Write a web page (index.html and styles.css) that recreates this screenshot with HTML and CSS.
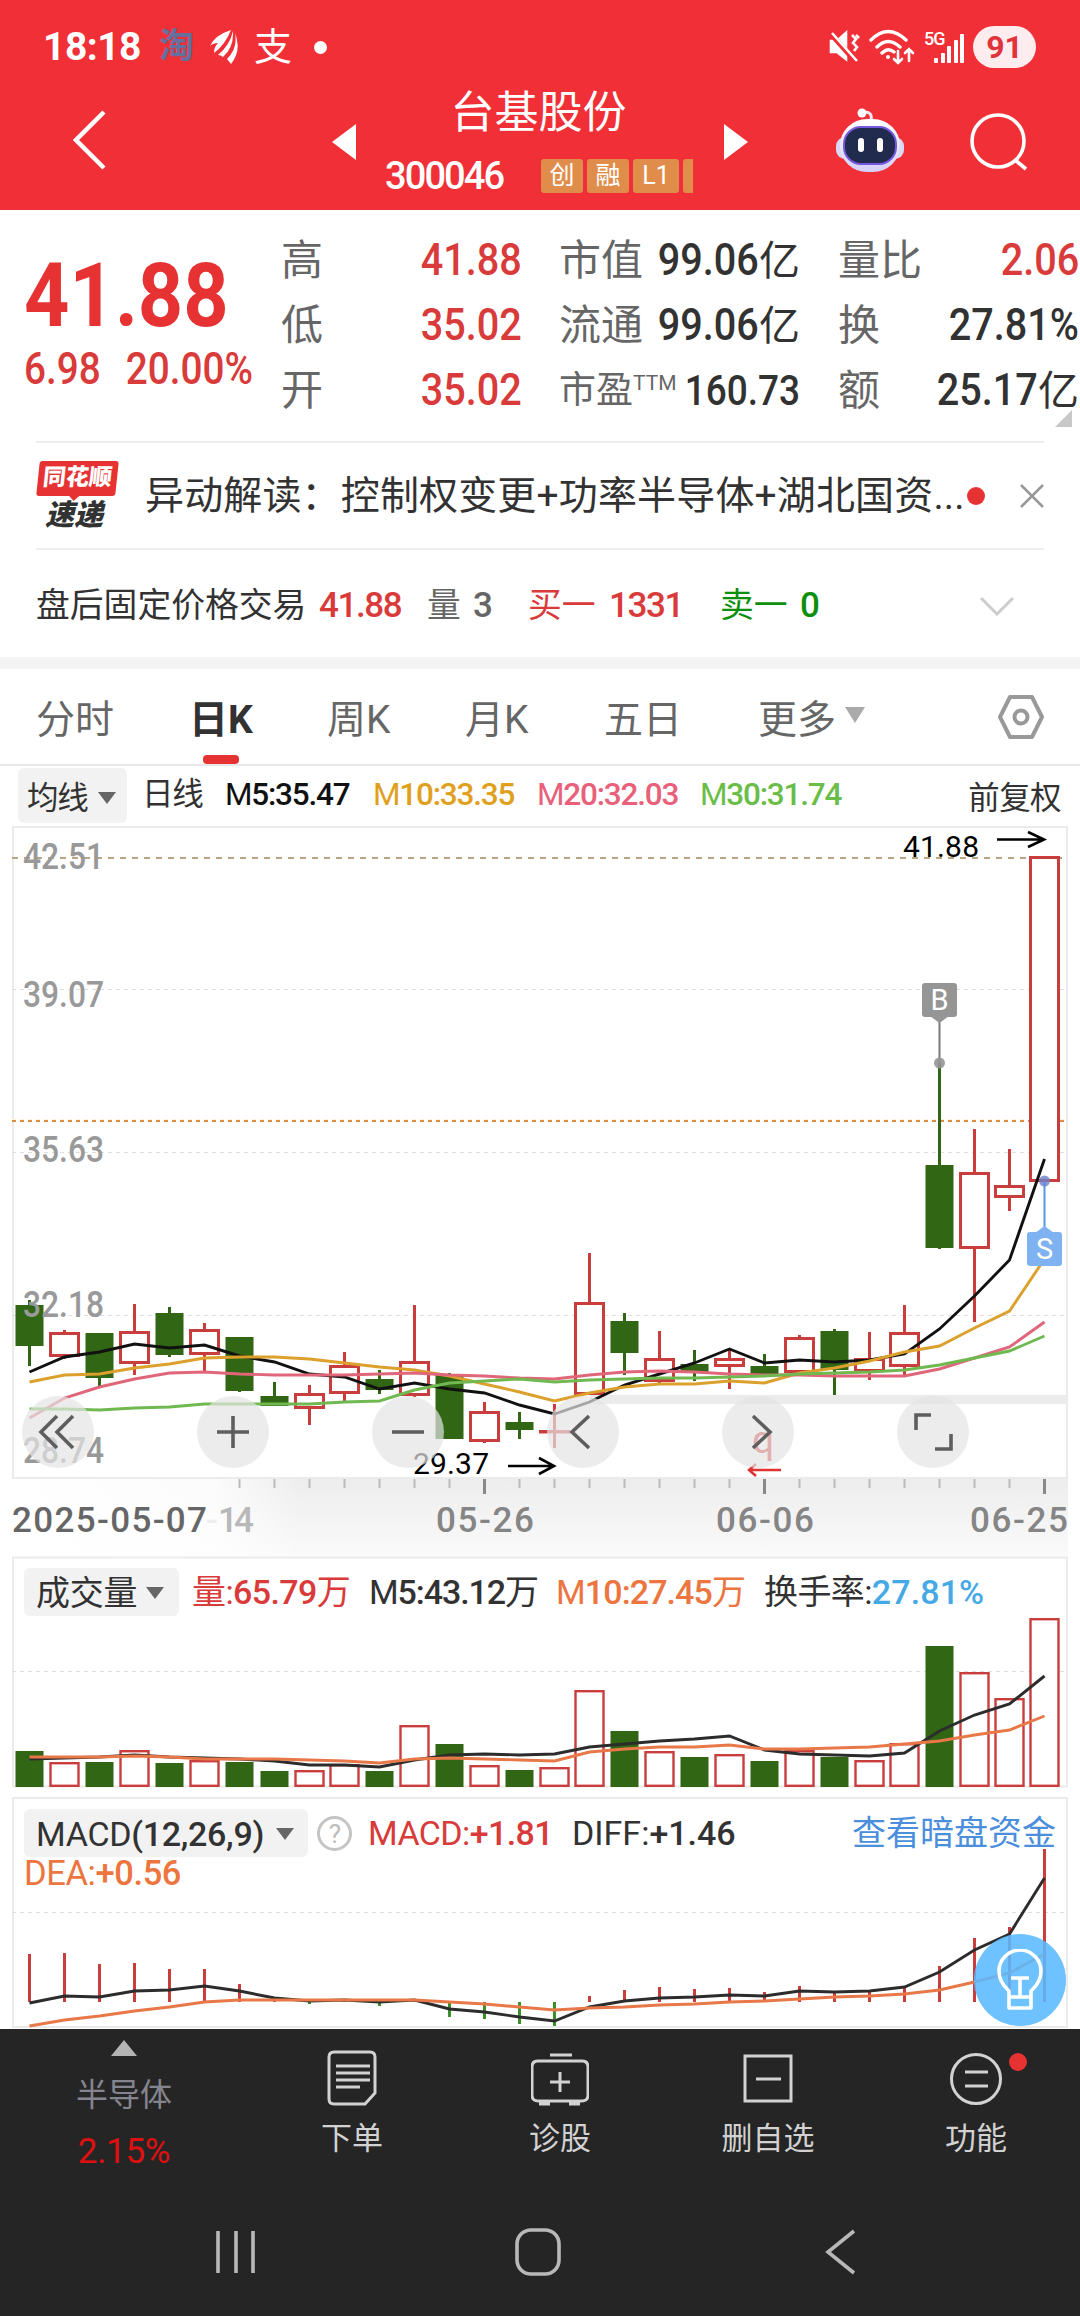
FILE: index.html
```html
<!DOCTYPE html>
<html lang="zh-CN">
<head>
    <meta charset="UTF-8">
    <meta name="viewport" content="width=device-width, initial-scale=1.0">
    <title>台基股份 300046</title>
    <link rel="stylesheet" href="styles.css">
</head>
<body>
    <header class="header">
        <div class="status">
            <span class="clock">18:18</span>
            <span class="tao">淘</span>
            <svg class="wing" width="30" height="34" viewBox="0 0 30 34"><path d="M21 0Q5 5 0 16Q3 13 8 13Q4 17 4 23Q15 15 21 0ZM23 1Q20 15 8 25Q11 25 13 27Q24 17 23 1ZM25 3Q28 18 17 29L21 34Q32 20 25 3Z" fill="#fff"/></svg>
            <span class="zhi">支</span>
            <span class="dot"></span>
            <div class="status-right">
                <svg width="31" height="34" viewBox="0 0 31 34" fill="none" stroke="#fff" stroke-width="2.6"><path d="M2 11h6l9-8v26l-9-7H2z" fill="#fff"/><path d="M1 3l25 28" stroke="#f12f37" stroke-width="5"/><path d="M3 3l25 28M23 5l4 4-3 4 4 4-3 4M27 5l3 3"/></svg>
                <svg width="48" height="36" viewBox="0 0 48 36" fill="none" stroke="#fff" stroke-width="3.4" stroke-linecap="round"><path d="M3 11Q20-6 38 11M9 18Q20 7 32 18M14 24Q20 18 26 23"/><circle cx="20" cy="28" r="2" fill="#fff" stroke="none"/><path d="M30 22v12m-4-4l4 4 4-4M41 32V20m-4 4l4-4 4 4" stroke-width="2.6"/></svg>
                <div class="signal"><span>5G</span><svg width="32" height="32" viewBox="0 0 32 32" fill="#fff"><rect x="1" y="27" width="4" height="5" rx="1"/><rect x="8" y="22" width="4" height="10" rx="1"/><rect x="14" y="15" width="4" height="17" rx="1"/><rect x="21" y="9" width="4" height="23" rx="1"/><rect x="27" y="3" width="4" height="29" rx="1"/></svg></div>
                <span class="battery">91</span>
            </div>
        </div>
        <div class="titlebar">
            <svg class="back" width="34" height="62" viewBox="0 0 34 62"><path d="M31 3L3 31l28 28" fill="none" stroke="#fff" stroke-width="4.5"/></svg>
            <svg class="prev" width="24" height="36" viewBox="0 0 24 36"><path d="M24 0v36L0 18z" fill="#fff"/></svg>
            <div class="stock">
                <h1>台基股份</h1>
                <div class="code-row">
                    <span class="code">300046</span>
                    <span class="tag">创</span><span class="tag">融</span><span class="tag l1">L1</span><span class="tag cut"></span>
                </div>
            </div>
            <svg class="next" width="24" height="36" viewBox="0 0 24 36"><path d="M0 0v36l24-18z" fill="#fff"/></svg>
            <svg class="robot" width="70" height="66" viewBox="0 0 70 66">
                <defs><linearGradient id="rb" x1="0" y1="0" x2="0" y2="1"><stop offset="0" stop-color="#fff"/><stop offset="1" stop-color="#d5d0f7"/></linearGradient></defs>
                <path d="M36 14Q38 4 28 5" fill="none" stroke="#f3e4ee" stroke-width="3"/><circle cx="27" cy="6" r="4.500" fill="#fff"/>
                <rect x="1" y="30" width="68" height="22" rx="9" fill="#d9d8f6"/>
                <rect x="5" y="12" width="60" height="53" rx="27" fill="url(#rb)"/>
                <rect x="9" y="20" width="52" height="37" rx="17" fill="#202b4d" stroke="#7457dd" stroke-width="2"/>
                <rect x="23" y="31" width="6" height="14" rx="3" fill="#fff"/><rect x="42" y="31" width="6" height="14" rx="3" fill="#fff"/>
            </svg>
            <svg class="search" width="60" height="60" viewBox="0 0 60 60" fill="none" stroke="#fff" stroke-width="3.600"><circle cx="29" cy="30" r="26"/><path d="M46 49l11 9"/></svg>
        </div>
    </header>

    <section class="quote">
        <div class="price">
            <div class="last">41.88</div>
            <div class="change"><span>6.98</span><span>20.00%</span></div>
        </div>
        <dl class="stats">
            <div><dt>高</dt><dd class="red"><b>41.88</b></dd></div>
            <div><dt>低</dt><dd class="red"><b>35.02</b></dd></div>
            <div><dt>开</dt><dd class="red"><b>35.02</b></dd></div>
        </dl>
        <dl class="stats">
            <div><dt>市值</dt><dd><b>99.06</b>亿</dd></div>
            <div><dt>流通</dt><dd><b>99.06</b>亿</dd></div>
            <div class="small"><dt>市盈<sup>TTM</sup></dt><dd><b>160.73</b></dd></div>
        </dl>
        <dl class="stats">
            <div><dt>量比</dt><dd class="red"><b>2.06</b></dd></div>
            <div><dt>换</dt><dd><b>27.81%</b></dd></div>
            <div><dt>额</dt><dd><b>25.17</b>亿</dd></div>
        </dl>
        <i class="corner"></i>
    </section>

    <section class="news">
        <div class="logo"><b>同花顺</b><em>速递</em></div>
        <p>异动解读：控制权变更+功率半导体+湖北国资...</p>
        <i class="red-dot"></i>
        <svg width="24" height="24" viewBox="0 0 24 24"><path d="M1 1l22 22M23 1L1 23" stroke="#999" stroke-width="2.500"/></svg>
    </section>

    <section class="after">
        <span class="name">盘后固定价格交易</span>
        <span class="n red v1">41.88</span>
        <span class="gray v2">量</span><span class="n gray v3">3</span>
        <span class="red v4">买一</span><span class="n red v5">1331</span>
        <span class="green v6">卖一</span><span class="n green">0</span>
        <svg width="34" height="20" viewBox="0 0 34 20"><path d="M1 2l16 16L33 2" fill="none" stroke="#ccc" stroke-width="3"/></svg>
    </section>

    <nav class="tabs">
        <a class="t1">分时</a>
        <a class="t2 active">日K</a>
        <a class="t3">周K</a>
        <a class="t4">月K</a>
        <a class="t5">五日</a>
        <a class="t6">更多<i class="arrow"></i></a>
        <svg width="46" height="44" viewBox="0 0 46 44" fill="none" stroke="#999" stroke-width="4"><path d="M12 2h22l10 20-10 20H12L2 22z" stroke-linejoin="round"/><circle cx="23" cy="22" r="6.500"/></svg>
    </nav>

    <div class="ma-row">
        <span class="pill">均线<i class="arrow"></i></span>
        <span class="cycle">日线</span>
        <span class="m5">M<b>5:35.47</b></span>
        <span class="m10">M<b>10:33.35</b></span>
        <span class="m20">M<b>20:32.03</b></span>
        <span class="m30">M<b>30:31.74</b></span>
        <span class="fq">前复权</span>
    </div>

    <section class="panel kline">
        <svg id="kline" width="1080" height="730" viewBox="0 826 1080 730">
            <defs>
                <linearGradient id="axisbg" x1="0" y1="0" x2="0" y2="1"><stop offset="0" stop-color="#ededed"/><stop offset="1" stop-color="#fafafa"/></linearGradient>
                <linearGradient id="fade"><stop offset="0" stop-color="#fff"/><stop offset=".7" stop-color="#fff" stop-opacity=".8"/><stop offset="1" stop-color="#fff" stop-opacity="0"/></linearGradient>
            </defs>
            <rect x="13" y="1479" width="1055" height="77" fill="url(#axisbg)"/>
            <rect x="12" y="1479" width="290" height="77" fill="url(#fade)"/>
            <rect x="13" y="827" width="1054" height="651" fill="#fff" stroke="#ebebeb" stroke-width="2"/>
            <path d="M12 989.500H1067M12 1152.500H1067M12 1315.500H1067" class="grid"/>
            <path d="M12 858H1067" stroke="#b9a582" stroke-width="2" stroke-dasharray="6 6"/>
            <path d="M12 1119.500H1067" stroke="#fdf3d4" stroke-dasharray="4 4"/>
            <path d="M12 1121H1067" stroke="#d98b4a" stroke-width="2" stroke-dasharray="4 4"/>
            <rect x="590" y="1395" width="478" height="9" fill="#ebebeb"/>
            <g id="candles"></g>
            <g class="price-label">
                <text x="23" y="868.500" textLength="81" lengthAdjust="spacingAndGlyphs">42.51</text>
                <text x="23" y="1006.500" textLength="81" lengthAdjust="spacingAndGlyphs">39.07</text>
                <text x="23" y="1161.500" textLength="81" lengthAdjust="spacingAndGlyphs">35.63</text>
                <text x="23" y="1316.500" textLength="81" lengthAdjust="spacingAndGlyphs">32.18</text>
                <text x="23" y="1462.500" textLength="81" lengthAdjust="spacingAndGlyphs">28.74</text>
            </g>
            <g id="ma"></g>
            <g class="mark">
                <text x="903" y="857" textLength="76">41.88</text>
                <path d="M997 839.500h47M1028 832l16 7.500-16 7.500"/>
                <text x="413" y="1474" textLength="76">29.37</text>
                <path d="M508 1466h46M539 1458l15 8-15 8"/>
            </g>
            <text x="752" y="1453" font-size="39" fill="#d33">q</text>
            <path d="M781 1470h-32M756 1464l-7 6 7 6" fill="none" stroke="#d33" stroke-width="2.500"/>
            <g class="flag" fill="#959595">
                <path d="M939.500 1020v43" stroke="#777" stroke-width="2"/>
                <circle cx="939.500" cy="1063" r="5.500" opacity=".9"/>
                <path d="M930 1016h19l-9.500 7z"/>
                <rect x="922" y="983" width="35" height="34" rx="3"/>
                <text x="939.500" y="1010">B</text>
            </g>
            <g class="flag" fill="#7fb2f0">
                <path d="M1044.500 1181v50" stroke="#5a96e0" stroke-width="2"/>
                <circle cx="1044.500" cy="1181" r="5.500" fill="#6b80cc" opacity=".8"/>
                <path d="M1035 1233h19l-9.500-7z"/>
                <rect x="1027" y="1232" width="35" height="34" rx="3"/>
                <text x="1044.500" y="1259">S</text>
            </g>
            <g id="ticks"></g>
            <g class="date-label">
                <text x="206" y="1532" fill="#eee">-</text>
                <text x="218" y="1532" textLength="36" fill="#b8b8b8">14</text>
                <text x="12" y="1532" textLength="195" fill="#666">2025-05-07</text>
                <text x="436" y="1532" textLength="98">05-26</text>
                <text x="716" y="1532" textLength="98">06-06</text>
                <text x="970" y="1532" textLength="98">06-25</text>
            </g>
            <g fill="#e4e4e4" fill-opacity=".7">
                <circle cx="58" cy="1432" r="36"/><circle cx="233" cy="1432" r="36"/><circle cx="408" cy="1432" r="36"/>
                <circle cx="583" cy="1432" r="36"/><circle cx="758" cy="1432" r="36"/><circle cx="933" cy="1432" r="36"/>
            </g>
            <path class="tool" d="M57 1416l-16 16 16 16M73 1416l-16 16 16 16M217 1432h32M233 1416v32M392 1432h32M589 1416l-17 16 17 16M753 1416l17 16-17 16M931 1415h-15v15M951 1434v15h-16"/>
        </svg>
    </section>

    <section class="panel volume">
        <svg id="volume" width="1080" height="241" viewBox="0 1556 1080 241">
            <rect x="13" y="1557.500" width="1054" height="229" fill="#fff" stroke="#ebebeb" stroke-width="2"/>
            <path d="M12 1671.500H1067" class="grid"/>
        </svg>
        <div class="legend">
            <span class="pill">成交量<i class="arrow"></i></span>
            <span class="red vol">量:<b>65.79</b>万</span>
            <span class="dark v5">M<b>5:43.12</b>万</span>
            <span class="orange v10">M<b>10:27.45</b>万</span>
            <span class="dark">换手率:</span><span class="blue"><b>27.81%</b></span>
        </div>
    </section>

    <section class="panel macd">
        <svg id="macd" width="1080" height="232" viewBox="0 1797 1080 232">
            <rect x="13" y="1798" width="1054" height="229" fill="#fff" stroke="#ebebeb" stroke-width="2"/>
            <path d="M12 1912.500H1067" class="grid"/>
        </svg>
        <div class="legend">
            <span class="pill">MACD<b>(12,26,9)</b><i class="arrow"></i></span>
            <span class="help">?</span>
            <span class="red mv">MACD:<b>+1.81</b></span>
            <span class="dark">DIFF:<b>+1.46</b></span>
            <a class="link">查看暗盘资金</a>
        </div>
        <div class="dea orange">DEA:<b>+0.56</b></div>
        <div class="bulb">
            <svg width="46" height="62" viewBox="0 0 46 62" fill="none" stroke="#fff" stroke-width="3.600" stroke-linejoin="round"><path d="M12 48V42Q2 33 2 22a21 21 0 0 1 42 0Q44 33 34 42v6M12 48h22v11H12zM14 29h18M23 29v19"/></svg>
        </div>
    </section>

    <footer class="footer">
        <div class="menu">
            <div class="sector"><i></i><span>半导体</span><strong>2.15%</strong></div>
            <div class="item">
                <svg width="58" height="58" viewBox="0 0 58 58"><path d="M11 3h36q5 0 5 5v36L42 55H11q-5 0-5-5V8q0-5 5-5zM13 17h34M13 24h34M13 31h34M13 38h24"/></svg>
                <span>下单</span>
            </div>
            <div class="item">
                <svg width="58" height="58" viewBox="0 0 58 58"><path d="M19 6h22M7 12h44q6 0 6 6v28q0 6-6 6H7q-6 0-6-6V18q0-6 6-6zM8 55h11M38 55h11M29 23v20M19 33h20"/></svg>
                <span>诊股</span>
            </div>
            <div class="item">
                <svg width="58" height="58" viewBox="0 0 58 58"><path d="M6 7h46v45H6zM17 30h25"/></svg>
                <span>删自选</span>
            </div>
            <div class="item">
                <svg width="58" height="58" viewBox="0 0 58 58"><circle cx="29" cy="30" r="24.500"/><path d="M18 23h23M18 37h23"/></svg>
                <span>功能</span>
                <i class="red-dot"></i>
            </div>
        </div>
        <div class="sysnav">
            <svg width="42" height="46" viewBox="0 0 42 46"><path d="M3 2v42M21 2v42M38 2v42"/></svg>
            <svg width="46" height="48" viewBox="0 0 46 48"><rect x="2" y="2" width="42" height="44" rx="14"/></svg>
            <svg width="32" height="46" viewBox="0 0 32 46"><path d="M29 2L3 23l26 21"/></svg>
        </div>
    </footer>

    <script src="script.js"></script>
</body>
</html>
```
FILE: styles.css
```css
* {
    box-sizing: border-box;
}

body {
    margin: 0;
    width: 1080px;
    background: #fff;
    color: #323232;
    font-family: Roboto, "Noto Sans CJK SC", sans-serif;
}

h1, p, dl, dd {
    margin: 0;
    font-weight: 400;
}

svg {
    display: block;
    flex: none;
}

b {
    font-weight: 500;
}

.red { color: #d93a3a; }
.green { color: #0c8f0c; }
.gray { color: #666; }
.dark { color: #323232; }
.orange { color: #ec7540; }
.blue { color: #45a9e6; }

.red-dot {
    width: 18px;
    height: 18px;
    border-radius: 50%;
    background: #e63232;
}

.arrow {
    display: inline-block;
    border: 9px solid transparent;
    border-top: 12px solid #666;
    border-bottom: 0;
}

/* header */
.header {
    height: 210px;
    background: #f12f37;
    color: #fff;
}

.status {
    display: flex;
    align-items: center;
    height: 94px;
    padding: 0 44px 0 43px;
}

.clock {
    width: 116px;
    font-size: 39px;
    font-weight: 700;
    letter-spacing: -0.5px;
}

.tao {
    width: 51px;
    color: #65709f;
    font-size: 35px;
    font-weight: 700;
    line-height: 36px;
}

.zhi {
    margin-left: 14px;
    font-size: 38px;
    line-height: 36px;
}

.status .dot {
    width: 13px;
    height: 13px;
    margin-left: 22px;
    border-radius: 50%;
    background: #fff;
}

.status-right {
    display: flex;
    align-items: center;
    gap: 8px;
    margin-left: auto;
}

.signal {
    position: relative;
    width: 40px;
    padding-left: 9px;
}

.signal span {
    position: absolute;
    left: 0;
    top: -3px;
    font-size: 18px;
    font-weight: 500;
    letter-spacing: -1px;
}

.battery {
    width: 63px;
    height: 42px;
    margin-left: 1px;
    border-radius: 21px;
    background: #feecee;
    color: #e0333b;
    font-size: 32px;
    font-weight: 700;
    line-height: 42px;
    text-align: center;
}

.titlebar {
    display: flex;
    height: 116px;
    padding-left: 73px;
}

.back { margin-top: 15px; }
.prev { margin: 30px 29px 0 225px; }
.next { margin-top: 30px; }
.robot { margin: 13px 0 0 87px; }
.search { margin: 17px 0 0 64px; }

.stock {
    width: 309px;
    margin-right: 30px;
}

.stock h1 {
    height: 66px;
    margin: -10px 0 0 -2px;
    font-size: 44px;
    line-height: 58px;
    text-align: center;
}

.code-row {
    display: flex;
    align-items: center;
    height: 52px;
    overflow: hidden;
}

.code {
    width: 156px;
    font-size: 38px;
    font-weight: 500;
    letter-spacing: -1.9px;
}

.tag {
    width: 42px;
    height: 34px;
    margin-right: 4px;
    flex: none;
    border-radius: 3px;
    background: #e08d4b;
    font-size: 25px;
    line-height: 33px;
    text-align: center;
}

.tag.l1 {
    width: 46px;
}

.tag.cut {
    width: 10px;
    margin: 0;
    border-radius: 3px 0 0 3px;
}

/* quote */
.quote {
    position: relative;
    display: grid;
    grid-template-columns: 255px 241px 241px 241px;
    height: 231px;
    padding: 18px 0 0 26px;
}

.last {
    height: 107px;
    margin-top: 15px;
    margin-left: -2px;
    color: #e63232;
    font-size: 89px;
    font-weight: 700;
    line-height: 106px;
    transform: scaleX(.89);
    transform-origin: left;
}

.change {
    display: flex;
    gap: 29px;
    margin-left: -2px;
    color: #d93a3a;
    font-size: 45px;
    font-weight: 500;
    line-height: 38px;
    white-space: nowrap;
    transform: scaleX(.86);
    transform-origin: left;
}

.stats:nth-child(3) { margin-left: 37px; margin-right: -37px; }
.stats:nth-child(4) { margin-left: 75px; margin-right: -75px; }

.stats div {
    display: flex;
    align-items: center;
    justify-content: space-between;
    height: 65px;
    white-space: nowrap;
}

.stats dt {
    color: #666;
    font-size: 42px;
    line-height: 60px;
}

.stats dd {
    font-size: 41px;
    line-height: 60px;
}

.stats dd b {
    display: inline-block;
    font-size: 45px;
    transform: scaleX(.88);
    transform-origin: right;
}

.stats .small dt { font-size: 37px; }
.stats .small dd b { font-size: 42px; }

.stats .small dd {
    margin-left: -20px;
}

.stats sup {
    font-size: 21px;
    vertical-align: 13px;
    line-height: 0;
}

.corner {
    position: absolute;
    right: 8px;
    top: 200px;
    border-left: 17px solid transparent;
    border-bottom: 17px solid #c8c8c8;
}

/* news */
.news {
    display: flex;
    align-items: center;
    height: 109px;
    margin: 0 36px;
    border-top: 2px solid #eee;
    border-bottom: 2px solid #eee;
}

.logo {
    width: 109px;
    line-height: 1;
}

.logo b {
    position: relative;
    display: block;
    width: 79px;
    height: 35px;
    margin-left: 2px;
    border-radius: 3px;
    background: #e63232;
    color: #fff;
    font-size: 23px;
    font-weight: 900;
    line-height: 34px;
    text-align: center;
    transform: skewX(-6deg);
}

.logo b::after {
    content: "";
    position: absolute;
    left: 32px;
    top: 34px;
    border: 6px solid transparent;
    border-top-color: #e63232;
    border-bottom: 0;
}

.logo em {
    display: block;
    margin: 5px 0 0 9px;
    font-size: 29px;
    font-weight: 900;
    line-height: 29px;
}

.news p {
    width: 822px;
    margin-top: -7px;
    font-size: 39px;
    letter-spacing: 0.15px;
    white-space: nowrap;
}

.news svg {
    margin-left: auto;
}

/* after hours */
.after {
    display: flex;
    align-items: center;
    height: 107px;
    padding: 4px 66px 0 36px;
    font-size: 33.8px;
    line-height: 50px;
    white-space: nowrap;
}

.after .n {
    font-size: 35px;
    font-weight: 500;
    letter-spacing: -1.4px;
}

.name { width: 283px; }
.v1 { width: 108px; }
.v2 { width: 46px; }
.v3 { width: 55px; }
.v4 { width: 81px; }
.after .v5 { width: 111px; }
.v6 { width: 80px; }

.after svg {
    margin-left: auto;
}

/* tabs */
.tabs {
    display: flex;
    height: 109px;
    padding-left: 36px;
    border-top: 12px solid #f4f4f4;
    border-bottom: 2px solid #e8e8e8;
    color: #666;
    font-size: 39px;
    line-height: 102px;
}

.t1 { width: 153px; }
.t2 { width: 138px; }
.t3 { width: 138px; }
.t4 { width: 139px; }
.t5 { width: 154px; }
.t6 { width: 240px; }

.t6 .arrow {
    margin: 0 0 10px 9px;
    border-width: 16px 10px 0;
    border-top-color: #aaa;
}

.tabs .active {
    position: relative;
    color: #323232;
    font-weight: 700;
}

.active::after {
    content: "";
    position: absolute;
    left: 14px;
    bottom: 0;
    width: 36px;
    height: 9px;
    border-radius: 4px;
    background: #e63232;
}

.tabs svg {
    margin-top: 26px;
}

/* moving averages */
.ma-row {
    display: flex;
    height: 60px;
    padding: 2px 19px 0 18px;
    font-size: 31.5px;
    letter-spacing: -1.2px;
    line-height: 54px;
    white-space: nowrap;
}

.pill {
    border-radius: 6px;
    background: #f2f2f2;
    color: #323232;
}

.ma-row .pill {
    width: 109px;
    height: 55px;
    margin-right: 15px;
    padding-left: 9px;
    line-height: 61px;
}

.ma-row .arrow {
    margin: 0 0 5px 10px;
}

.cycle { width: 83px; }
.m5 { width: 148px; color: #111; }
.m10 { width: 164px; color: #e0a01e; }
.m20 { width: 163px; color: #e8607a; }
.m30 { width: 140px; color: #69bd48; }

.fq {
    margin-left: auto;
    letter-spacing: -0.6px;
    line-height: 62px;
}

/* chart panels */
.panel {
    position: relative;
}

.kline { height: 730px; }
.volume { height: 241px; }
.macd { height: 232px; }

.grid {
    fill: none;
    stroke: #ddd;
    stroke-width: 1.2;
    stroke-dasharray: 4 4;
}

.price-label {
    fill: #999;
    font-size: 36.5px;
    font-weight: 500;
}

.date-label {
    fill: #858585;
    font-size: 35px;
    font-weight: 500;
}

.mark {
    font-size: 30px;
}

.mark path {
    fill: none;
    stroke: #000;
    stroke-width: 2.6;
}

.flag text {
    fill: #fff;
    font-size: 29px;
    text-anchor: middle;
}

.tool {
    fill: none;
    stroke: #5e5e5e;
    stroke-width: 3.6;
}

.legend {
    position: absolute;
    left: 24px;
    right: 24px;
    top: 12px;
    display: flex;
    align-items: center;
    height: 48px;
    font-size: 34px;
    letter-spacing: -0.6px;
    line-height: 50px;
    white-space: nowrap;
}

.legend .pill {
    height: 48px;
    padding-left: 12px;
}

.legend .arrow {
    margin: 0 0 6px 9px;
}

.volume .pill {
    width: 155px;
    margin-right: 13px;
    letter-spacing: -0.2px;
}

.volume .vol { width: 177px; }

.volume .v5 {
    width: 187px;
    letter-spacing: -1.1px;
}

.volume .v10 {
    width: 208px;
    letter-spacing: -0.9px;
}

.volume .blue {
    letter-spacing: 0.1px;
}

.macd .pill {
    width: 284px;
    margin-right: 9px;
    letter-spacing: -0.3px;
}

.macd .arrow {
    margin-left: 12px;
}

.help {
    width: 35px;
    height: 35px;
    margin-right: 16px;
    border: 3px solid #c4c4c4;
    border-radius: 50%;
    color: #bbb;
    font-size: 26px;
    line-height: 30px;
    text-align: center;
}

.mv { width: 204px; }

.macd .dark {
    letter-spacing: 0;
}

.link {
    margin-left: auto;
    color: #4a8edc;
    letter-spacing: 0;
}

.dea {
    position: absolute;
    left: 24px;
    top: 56px;
    font-size: 34.5px;
    letter-spacing: -0.4px;
    line-height: 40px;
}

.bulb {
    position: absolute;
    left: 974px;
    top: 137px;
    display: flex;
    align-items: center;
    justify-content: center;
    width: 92px;
    height: 92px;
    border-radius: 50%;
    background: rgba(90, 185, 255, .88);
}

/* footer */
.footer {
    height: 287px;
    background: #252525;
}

.menu {
    display: grid;
    grid-template-columns: 248px repeat(4, 208px);
    height: 180px;
}

.sector, .item {
    position: relative;
    display: flex;
    flex-direction: column;
    align-items: center;
}

.sector i {
    margin-top: 11px;
    border: 13px solid transparent;
    border-top: 0;
    border-bottom: 16px solid #b4b4b4;
}

.sector span {
    margin-top: 15px;
    color: #85858f;
    font-size: 32px;
    line-height: 48px;
}

.sector strong {
    color: #e01010;
    font-size: 35px;
    font-weight: 400;
    letter-spacing: -0.3px;
    line-height: 66px;
}

.item {
    padding-top: 20px;
    color: #d2d2d2;
    font-size: 31px;
    line-height: 64px;
}

.item svg {
    fill: none;
    stroke: #d2d2d2;
    stroke-width: 3;
}

.item .red-dot {
    position: absolute;
    left: 137px;
    top: 24px;
}

.sysnav {
    display: flex;
    align-items: center;
    height: 86px;
    padding-left: 215px;
}

.sysnav svg {
    margin-right: 258px;
    fill: none;
    stroke: #b8b8b8;
    stroke-width: 3.6;
}

.sysnav svg + svg {
    margin-right: 264px;
}
```
FILE: script.js
```js
const X0 = 29.5, STEP = 35, BAR = 28;
const RED = '#c93d3d', GREEN = '#306614';

// [up, body top, body bottom, wick top, wick bottom]
const candles = [
    [0,1305,1346,1300,1366], [1,1332,1357,1330,1359], [0,1333,1378,1333,1386], [1,1331,1364,1304,1375],
    [0,1313,1355,1307,1357], [1,1329,1355,1323,1373], [0,1337,1391,1337,1392], [0,1396,1406,1382,1406],
    [1,1393,1409,1385,1425], [1,1365,1394,1352,1401], [0,1379,1390,1370,1394], [1,1361,1396,1305,1397],
    [0,1375,1439,1373,1439], [1,1411,1442,1402,1443], [0,1422,1430,1412,1439], [1,1430,1432,1404,1448],
    [1,1302,1395,1253,1395], [0,1321,1353,1313,1375], [1,1358,1382,1331,1383], [0,1364,1373,1350,1381],
    [1,1358,1367,1349,1389], [0,1366,1374,1354,1374], [1,1337,1373,1335,1373], [0,1331,1370,1329,1395],
    [1,1358,1372,1332,1380], [1,1332,1367,1305,1376], [0,1165,1248,1063,1249], [1,1172,1249,1129,1322],
    [1,1185,1198,1149,1211], [1,856,1182,856,1182]
];
const ma = [
    ['#111', [1372,1357,1352,1344,1348,1345,1356,1362,1374,1377,1389,1383,1389,1393,1405,1414,1402,1385,1374,1363,1349,1363,1360,1362,1360,1354,1329,1296,1260,1159]],
    ['#dca02c', [1382,1375,1374,1368,1364,1358,1357,1357,1359,1363,1367,1370,1376,1384,1392,1401,1393,1387,1384,1384,1381,1383,1373,1368,1361,1352,1346,1328,1311,1259]],
    ['#e0667a', [1418,1398,1387,1379,1373,1372,1374,1375,1375,1375,1374,1373,1375,1376,1378,1379,1375,1372,1371,1372,1374,1375,1375,1376,1376,1376,1369,1358,1347,1322]],
    ['#70b850', [1409,1409,1410,1408,1407,1404,1404,1404,1404,1402,1401,1390,1383,1381,1379,1382,1380,1379,1378,1378,1377,1376,1374,1373,1372,1370,1365,1358,1351,1336]]
];
const volume = [1751,1762,1762,1750,1763,1760,1762,1771,1770,1764,1771,1725,1744,1765,1770,1767,1690,1731,1751,1757,1754,1761,1750,1757,1760,1743,1646,1672,1698,1618];
const volMa = [
    ['#2c2c2c', [1759,1758,1757,1755,1757,1758,1759,1761,1765,1765,1767,1760,1755,1754,1755,1754,1747,1744,1741,1739,1736,1750,1754,1755,1756,1753,1731,1715,1704,1676]],
    ['#e87848', [1757,1757,1757,1756,1757,1759,1759,1759,1760,1761,1763,1759,1758,1759,1760,1761,1752,1749,1747,1747,1745,1749,1749,1748,1747,1744,1741,1735,1730,1716]]
];
const macd = [1954,1953,1964,1963,1969,1969,1984,2000,2004,2000,2006,2000,2017,2019,2024,2026,1996,1990,1987,1989,1988,1992,1986,1992,1991,1988,1966,1938,1927,1849];
const macdLines = [
    ['#2c2c2c', [2003,1996,1997,1991,1990,1986,1991,1998,2001,2000,2002,2000,2009,2012,2017,2021,2007,2001,1998,1997,1995,1996,1991,1992,1991,1987,1972,1950,1934,1878]],
    ['#e87848', [2026,2020,2016,2011,2007,2002,2000,2000,2000,2000,2000,2000,2002,2004,2007,2010,2008,2007,2005,2004,2002,2001,1999,1997,1996,1994,1990,1982,1973,1954]]
];

function add(parent, tag, attrs) {
    const el = document.createElementNS('http://www.w3.org/2000/svg', tag);
    for (const key in attrs) {
        el.setAttribute(key, attrs[key]);
    }
    document.getElementById(parent).appendChild(el);
}

function line(parent, x, y1, y2, color, width) {
    add(parent, 'path', { d: `M${x} ${y1}V${y2}`, stroke: color, 'stroke-width': width });
}

function drawLines(parent, lines) {
    lines.forEach(([color, ys]) => {
        const points = ys.map((y, i) => `${X0 + i * STEP},${y}`).join(' ');
        add(parent, 'polyline', { points, fill: 'none', stroke: color, 'stroke-width': 2.9 });
    });
}

function box(parent, x, top, bottom, up, border) {
    if (up) {
        add(parent, 'rect', { x: x - BAR / 2, y: top + border / 2, width: BAR, height: Math.max(bottom - top - border, 0.5), fill: '#fff', stroke: RED, 'stroke-width': border });
    } else {
        add(parent, 'rect', { x: x - BAR / 2, y: top, width: BAR, height: bottom - top, fill: GREEN });
    }
}

candles.forEach(([up, top, bottom, high, low], i) => {
    const x = X0 + i * STEP;
    line('candles', x, high, low, up ? RED : GREEN, 3);
    box('candles', x, top, bottom, up, 3);
    box('volume', x, volume[i], 1787, up, 2.4);

    const base = 2002;
    line('macd', x, macd[i], base, macd[i] > base ? '#3d8f2c' : RED, 3);

    if (i > 5) {
        const major = i === 13 || i === 21 || i === 29;
        line('ticks', x, 1479, major ? 1494 : 1488, major ? '#888' : '#bbb', major ? 3 : 2);
    }
});
drawLines('ma', ma);
drawLines('volume', volMa);
drawLines('macd', macdLines);
```
